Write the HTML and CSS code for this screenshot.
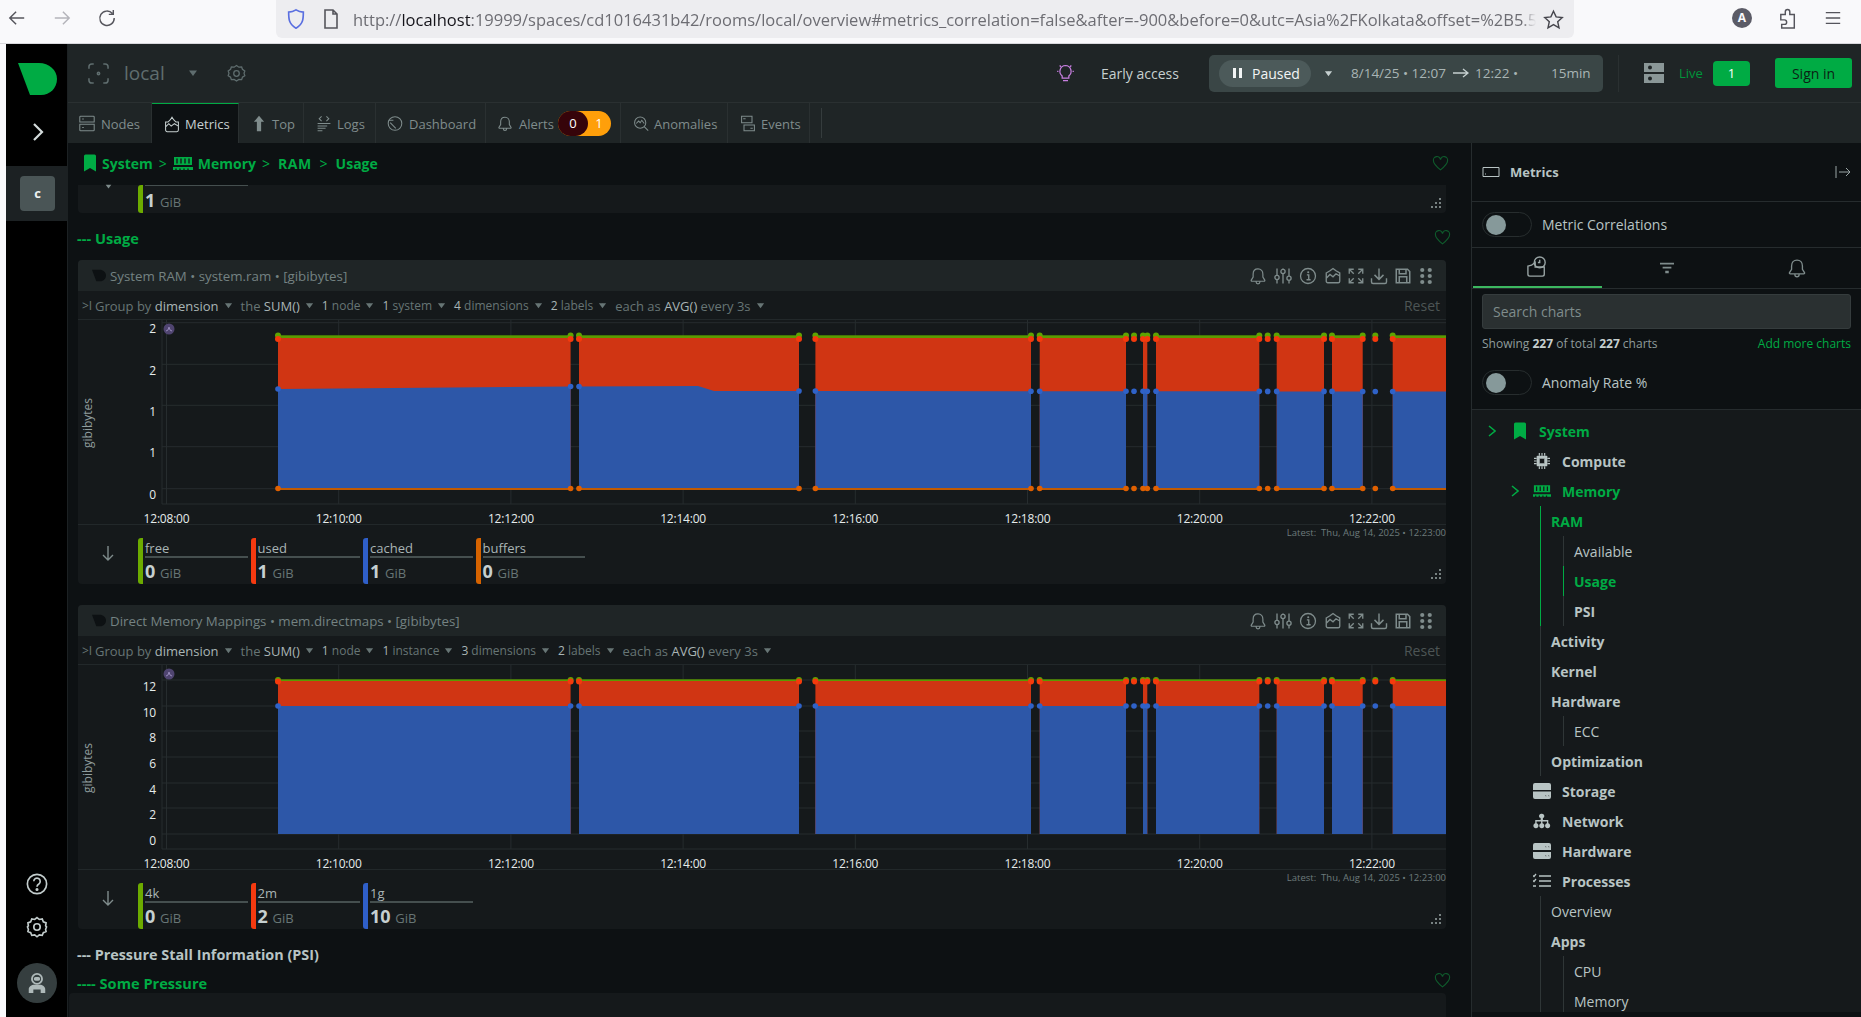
FILE: index.html
```html
<!DOCTYPE html>
<html lang="en">
<head>
    <meta charset="UTF-8">
    <meta name="viewport" content="width=device-width, initial-scale=1.0">
    <title>Netdata - local</title>
    <link rel="stylesheet" href="styles.css">
</head>
<body>
    <svg class="icon-defs" xmlns="http://www.w3.org/2000/svg">
        <symbol id="i-logo" viewBox="0 0 39 32"><path d="M0 0H21C31 0 39 7 39 16S32 32 23 32H12Z"/></symbol>
        <symbol id="i-bell" viewBox="0 0 24 24"><path d="M12 2.500c-4 0-6.500 3-6.500 7v4L3 17.500c-.4.8 0 1.500 1 1.500h16c1 0 1.400-.7 1-1.500l-2.500-4v-4c0-4-2.500-7-6.500-7zM9.500 19v1c0 1.500 1 2.500 2.500 2.500s2.500-1 2.500-2.500v-1" fill="none" stroke="currentColor" stroke-width="1.600"/></symbol>
        <symbol id="i-sliders" viewBox="0 0 24 24"><g fill="none" stroke="currentColor" stroke-width="1.800"><path d="M4 2v9M4 17v5M12 2v1M12 9v13M20 2v10M20 18v4"/><circle cx="4" cy="14" r="2.800"/><circle cx="12" cy="6" r="2.800"/><circle cx="20" cy="15" r="2.800"/></g></symbol>
        <symbol id="i-info" viewBox="0 0 24 24"><circle cx="12" cy="12" r="10" fill="none" stroke="currentColor" stroke-width="1.700"/><path d="M10.500 10.500H13V17M10 17h5.500" fill="none" stroke="currentColor" stroke-width="1.800"/><circle cx="12.300" cy="7" r="1.400" fill="currentColor"/></symbol>
        <symbol id="i-chart" viewBox="0 0 24 24"><path d="M3 8l5-3 4-3 4 3 5 3v11a2 2 0 0 1-2 2H5a2 2 0 0 1-2-2zM3 15l5-5 4 3 4-4 5 3" fill="none" stroke="currentColor" stroke-width="1.800"/></symbol>
        <symbol id="i-expand" viewBox="0 0 24 24"><path d="M3 9V3h6M3 3l6 6M21 9V3h-6M21 3l-6 6M3 15v6h6M3 21l6-6M21 15v6h-6M21 21l-6-6" fill="none" stroke="currentColor" stroke-width="1.800"/></symbol>
        <symbol id="i-download" viewBox="0 0 24 24"><path d="M12 2v14M6 10.500l6 6 6-6M2 15v5a2 2 0 0 0 2 2h16a2 2 0 0 0 2-2v-5" fill="none" stroke="currentColor" stroke-width="1.900"/></symbol>
        <symbol id="i-save" viewBox="0 0 24 24"><path d="M3 3h15l3 3v15H3zM7 3v6h9V3M7 21v-8h10v8" fill="none" stroke="currentColor" stroke-width="2"/></symbol>
        <symbol id="i-dots" viewBox="0 0 24 24"><g fill="currentColor"><circle cx="7" cy="4" r="2.800"/><circle cx="17" cy="4" r="2.800"/><circle cx="7" cy="12" r="2.800"/><circle cx="17" cy="12" r="2.800"/><circle cx="7" cy="20" r="2.800"/><circle cx="17" cy="20" r="2.800"/></g></symbol>
        <symbol id="i-heart" viewBox="0 0 24 24"><path d="M12 21C6 16 2 12.500 2 8a5 5 0 0 1 10-1.500A5 5 0 0 1 22 8c0 4.500-4 8-10 13z" fill="none" stroke="currentColor" stroke-width="1.600"/></symbol>
        <symbol id="i-grip" viewBox="0 0 12 12"><g fill="currentColor"><circle cx="10" cy="2" r="1"/><circle cx="6" cy="6" r="1"/><circle cx="10" cy="6" r="1"/><circle cx="2" cy="10" r="1"/><circle cx="6" cy="10" r="1"/><circle cx="10" cy="10" r="1"/></g></symbol>
        <symbol id="i-caret" viewBox="0 0 10 10"><path d="M1 2.500h8L5 8z" fill="currentColor"/><path d="M5 3v3" stroke="currentColor"/></symbol>
        <symbol id="i-bookmark" viewBox="0 0 14 18"><path d="M1 2a1.500 1.500 0 0 1 1.500-1.500h9A1.500 1.500 0 0 1 13 2v15.500l-6-3.500-6 3.500z" fill="currentColor"/></symbol>
        <symbol id="i-ram" viewBox="0 0 20 15"><path d="M1 1h18v8H1zM0 11h20v3H0z" fill="currentColor"/><path d="M4 2.500v5M8 2.500v5M12 2.500v5M16 2.500v5M3 12.500v2M7 12.500v2M11 12.500v2M15 12.500v2" stroke="#15191b" stroke-width="1.400"/></symbol>
        <symbol id="i-server" viewBox="0 0 20 20"><path d="M0 0h20v9H0zM0 11h20v9H0z" fill="currentColor"/><circle cx="6" cy="4.500" r="2" fill="#1f2526"/><circle cx="6" cy="15.500" r="2" fill="#1f2526"/></symbol>
    </svg>

    <div class="browser-bar">
        <svg class="nav-icon nav-back" viewBox="0 0 20 20"><path d="M18 10H3M9 3l-7 7 7 7"/></svg>
        <svg class="nav-icon nav-forward" viewBox="0 0 20 20"><path d="M2 10h15M11 3l7 7-7 7"/></svg>
        <svg class="nav-icon nav-reload" viewBox="0 0 20 20"><path d="M16 5a8 8 0 1 0 2 5M17 1v5h-5"/></svg>
        <div class="url-bar">
            <svg class="url-shield" viewBox="0 0 20 24"><path d="M10 2c3 2 5 2.500 8 2.500 0 7 0 13-8 17.500C2 17.500 2 11.500 2 4.500 5 4.500 7 4 10 2z"/></svg>
            <svg class="url-file" viewBox="0 0 16 20"><path d="M2 1h8l4 4v14H2zM10 1v4h4"/></svg>
            <div class="url-text">http://<b>localhost</b>:19999/spaces/cd1016431b42/rooms/local/overview#metrics_correlation=false&amp;after=-900&amp;before=0&amp;utc=Asia%2FKolkata&amp;offset=%2B5.5</div>
            <svg class="url-star" viewBox="0 0 24 24"><path d="M12 2.500l3 6.500 7 .8-5.200 4.700 1.500 7L12 17.900l-6.300 3.600 1.500-7L2 9.800 9 9z"/></svg>
        </div>
        <div class="browser-tools">
            <span class="account-icon">A</span>
            <svg class="nav-icon puzzle-icon" viewBox="0 0 20 24"><path d="M2 7h5V4a2.500 2.500 0 0 1 5 0v3h5v15H3v-4h3a2.500 2.500 0 0 0 0-5H2z"/></svg>
            <svg class="nav-icon menu-icon" viewBox="0 0 20 20"><path d="M2 4h16M2 10h16M2 16h16"/></svg>
        </div>
    </div>

    <div class="app">
        <aside class="rail">
            <svg class="rail-logo"><use href="#i-logo"/></svg>
            <svg class="rail-toggle" viewBox="0 0 12 20"><path d="M2 2l8 8-8 8"/></svg>
            <div class="rail-space"><span class="space-tile">c</span></div>
            <div class="rail-bottom">
                <svg class="rail-icon" viewBox="0 0 24 24"><circle cx="12" cy="12" r="10.500"/><path d="M8.500 9a3.500 3.500 0 1 1 5.500 3c-1.300.8-2 1.500-2 3"/><circle class="rail-dot" cx="12" cy="18" r=".8"/></svg>
                <svg class="rail-icon rail-gear" viewBox="0 0 24 24"><circle cx="12" cy="12" r="3.500"/><path d="M12 1.800l2.500 2 3.200-.5 1.200 3 3 1.200-.5 3.200 1 1.300-1 2.500.5 2.500-3 1.200-1.200 3-3.200-.5-2.500 2-2.500-2-3.200.5-1.200-3-3-1.200.5-2.500-1-2.500 1-1.300-.5-3.200 3-1.200 1.200-3 3.200.5z"/></svg>
                <div class="avatar">
                    <svg viewBox="0 0 24 24"><circle cx="12" cy="7.500" r="5.500" fill="none" stroke="#aeb9b9" stroke-width="2"/><rect x="8.500" y="5.500" width="7" height="4" rx="2" fill="#aeb9b9"/><path d="M3 23v-4c0-3 3-5 6-5h6c3 0 6 2 6 5v4h-5v-4H8v4z" fill="#aeb9b9"/></svg>
                </div>
            </div>
        </aside>

        <div class="workspace">
            <header class="top-bar">
                <svg class="room-icon" viewBox="0 0 22 22"><path d="M6 1H4a3 3 0 0 0-3 3v2M16 1h2a3 3 0 0 1 3 3v2M6 21H4a3 3 0 0 1-3-3v-2M16 21h2a3 3 0 0 0 3-3v-2"/><circle cx="11" cy="11" r="1.200"/></svg>
                <span class="room-name">local</span>
                <svg class="caret room-caret"><use href="#i-caret"/></svg>
                <svg class="room-gear" viewBox="0 0 24 24"><circle cx="12" cy="12" r="3.500"/><path d="M12 2l3 2 3.500-.3 1 3 3 2-1 3 1 3-3 2-1 3-3.500-.3-3 2-3-2-3.500.3-1-3-3-2 1-3-1-3 3-2 1-3 3.500.3z"/></svg>
                <div class="top-spacer"></div>
                <svg class="bulb-icon" viewBox="0 0 20 24"><path d="M10 3a7 7 0 0 0-4 12.500V18h8v-2.500A7 7 0 0 0 10 3zM7 21h6M3 3l1.500 1.500M17 3l-1.500 1.500M0 10h1.500M18.500 10H20"/></svg>
                <span class="early-access">Early access</span>
                <div class="time-box">
                    <div class="paused-pill"><span class="pause-mark"></span>Paused</div>
                    <svg class="caret time-caret"><use href="#i-caret"/></svg>
                    <span class="time-range">8/14/25 • 12:07 <svg class="time-arrow" viewBox="0 0 16 10"><path d="M0 5h15M10 1l5 4-5 4"/></svg> 12:22 •</span>
                    <span class="time-span">15min</span>
                </div>
                <div class="top-divider"></div>
                <svg class="live-icon"><use href="#i-server"/></svg>
                <span class="live-label">Live</span>
                <span class="live-count">1</span>
                <button class="sign-in">Sign in</button>
            </header>

            <nav class="tabs">
                <a class="tab tab-nodes"><svg viewBox="0 0 20 20"><path d="M2 1h16a1 1 0 0 1 1 1v6H1V2a1 1 0 0 1 1-1zM1 11h18v7a1 1 0 0 1-1 1H2a1 1 0 0 1-1-1zM4 4.500h2M4 15h2"/></svg>Nodes</a>
                <a class="tab tab-metrics is-active"><svg viewBox="0 0 20 20"><path d="M2 7l3 0 3-3 2-3 2 3 3 3 3 0v10a2 2 0 0 1-2 2H4a2 2 0 0 1-2-2zM2 13l4-4 3 3 4-3 5 3"/></svg>Metrics</a>
                <a class="tab tab-top"><svg viewBox="0 0 14 20"><path class="solid" d="M7 1l6 7H9.500v11h-5V8H1z"/></svg>Top</a>
                <a class="tab tab-logs"><svg viewBox="0 0 20 20"><path d="M7 1L4 4l3 3M13 1l3 3-3 3M2 10h16M2 13h12M2 16h10M2 19h6"/></svg>Logs</a>
                <a class="tab tab-dash"><svg viewBox="0 0 20 20"><circle cx="10" cy="10" r="8.500"/><path d="M4 9l7 7M2 6h6"/></svg>Dashboard</a>
                <a class="tab tab-alerts"><svg viewBox="0 0 24 24"><use href="#i-bell"/></svg>Alerts
                    <span class="alert-badge"><span class="alert-crit">0</span><span class="alert-warn">1</span></span>
                </a>
                <a class="tab tab-anom"><svg viewBox="0 0 20 20"><circle cx="9" cy="9" r="7"/><path d="M14 14l5 5M4 10l3-3 2 2 2-3 3 4"/></svg>Anomalies</a>
                <a class="tab tab-events"><svg viewBox="0 0 20 20"><path d="M2 1h13v8H2zM5 12h13v7H5zM4 4h3M13 16h3"/></svg>Events</a>
                <span class="tab-divider"></span>
            </nav>

            <div class="content">
                <main class="main">
                    <div class="crumbs">
                        <svg class="crumb-mark"><use href="#i-bookmark"/></svg><span>System</span><i>&gt;</i>
                        <svg class="crumb-ram"><use href="#i-ram"/></svg><span>Memory</span><i>&gt;</i>
                        <span class="crumb-ram-name">RAM</span><i>&gt;</i><span class="crumb-usage">Usage</span>
                        <svg class="heart heart-crumbs"><use href="#i-heart"/></svg>
                    </div>

                    <div class="stub-card">
                        <svg class="caret stub-caret"><use href="#i-caret"/></svg>
                        <div class="legend-item legend-green stub-legend">
                            <span class="legend-name"></span>
                            <span class="legend-value">1 <small>GiB</small></span>
                        </div>
                        <svg class="grip"><use href="#i-grip"/></svg>
                    </div>

                    <h3 class="section-title section-usage is-green">--- Usage<svg class="heart heart-section"><use href="#i-heart"/></svg></h3>

                    <section class="chart-card">
                        <div class="chart-head">
                            <svg class="chart-logo"><use href="#i-logo"/></svg>
                            <span class="chart-title">System RAM • system.ram • [gibibytes]</span>
                            <div class="chart-tools">
                                <svg><use href="#i-bell"/></svg><svg><use href="#i-sliders"/></svg><svg><use href="#i-info"/></svg><svg><use href="#i-chart"/></svg><svg><use href="#i-expand"/></svg><svg><use href="#i-download"/></svg><svg><use href="#i-save"/></svg><svg><use href="#i-dots"/></svg>
                            </div>
                        </div>
                        <div class="chart-filters">
                            <span class="filter-toggle">&gt;I</span>
                            <span class="filter">Group by <b>dimension</b><svg class="caret"><use href="#i-caret"/></svg></span>
                            <span class="filter">the <b>SUM()</b><svg class="caret"><use href="#i-caret"/></svg></span>
                            <span class="filter filter-count"><b>1</b> node<svg class="caret"><use href="#i-caret"/></svg></span>
                            <span class="filter filter-count"><b>1</b> system<svg class="caret"><use href="#i-caret"/></svg></span>
                            <span class="filter filter-count"><b>4</b> dimensions<svg class="caret"><use href="#i-caret"/></svg></span>
                            <span class="filter filter-count"><b>2</b> labels<svg class="caret"><use href="#i-caret"/></svg></span>
                            <span class="filter">each as <b>AVG()</b> every 3s<svg class="caret"><use href="#i-caret"/></svg></span>
                            <span class="filter-reset">Reset</span>
                        </div>
                        <div class="chart-plot" id="chartRam"></div>
                        <div class="chart-legend">
                            <span class="legend-latest">Latest:&nbsp; Thu, Aug 14, 2025 • 12:23:00</span>
                            <svg class="legend-arrow" viewBox="0 0 12 16"><path d="M6 1v14M1 10l5 5 5-5"/></svg>
                            <div class="legend-item legend-green"><span class="legend-name">free</span><span class="legend-value">0 <small>GiB</small></span></div>
                            <div class="legend-item legend-red"><span class="legend-name">used</span><span class="legend-value">1 <small>GiB</small></span></div>
                            <div class="legend-item legend-blue"><span class="legend-name">cached</span><span class="legend-value">1 <small>GiB</small></span></div>
                            <div class="legend-item legend-orange"><span class="legend-name">buffers</span><span class="legend-value">0 <small>GiB</small></span></div>
                            <svg class="grip"><use href="#i-grip"/></svg>
                        </div>
                    </section>

                    <section class="chart-card chart-card-second">
                        <div class="chart-head">
                            <svg class="chart-logo"><use href="#i-logo"/></svg>
                            <span class="chart-title">Direct Memory Mappings • mem.directmaps • [gibibytes]</span>
                            <div class="chart-tools">
                                <svg><use href="#i-bell"/></svg><svg><use href="#i-sliders"/></svg><svg><use href="#i-info"/></svg><svg><use href="#i-chart"/></svg><svg><use href="#i-expand"/></svg><svg><use href="#i-download"/></svg><svg><use href="#i-save"/></svg><svg><use href="#i-dots"/></svg>
                            </div>
                        </div>
                        <div class="chart-filters">
                            <span class="filter-toggle">&gt;I</span>
                            <span class="filter">Group by <b>dimension</b><svg class="caret"><use href="#i-caret"/></svg></span>
                            <span class="filter">the <b>SUM()</b><svg class="caret"><use href="#i-caret"/></svg></span>
                            <span class="filter filter-count"><b>1</b> node<svg class="caret"><use href="#i-caret"/></svg></span>
                            <span class="filter filter-count"><b>1</b> instance<svg class="caret"><use href="#i-caret"/></svg></span>
                            <span class="filter filter-count"><b>3</b> dimensions<svg class="caret"><use href="#i-caret"/></svg></span>
                            <span class="filter filter-count"><b>2</b> labels<svg class="caret"><use href="#i-caret"/></svg></span>
                            <span class="filter">each as <b>AVG()</b> every 3s<svg class="caret"><use href="#i-caret"/></svg></span>
                            <span class="filter-reset">Reset</span>
                        </div>
                        <div class="chart-plot" id="chartMaps"></div>
                        <div class="chart-legend">
                            <span class="legend-latest">Latest:&nbsp; Thu, Aug 14, 2025 • 12:23:00</span>
                            <svg class="legend-arrow" viewBox="0 0 12 16"><path d="M6 1v14M1 10l5 5 5-5"/></svg>
                            <div class="legend-item legend-green"><span class="legend-name">4k</span><span class="legend-value">0 <small>GiB</small></span></div>
                            <div class="legend-item legend-red"><span class="legend-name">2m</span><span class="legend-value">2 <small>GiB</small></span></div>
                            <div class="legend-item legend-blue"><span class="legend-name">1g</span><span class="legend-value">10 <small>GiB</small></span></div>
                            <svg class="grip"><use href="#i-grip"/></svg>
                        </div>
                    </section>

                    <h3 class="section-title section-psi">--- Pressure Stall Information (PSI)</h3>
                    <h3 class="section-title section-some is-green">---- Some Pressure<svg class="heart heart-section"><use href="#i-heart"/></svg></h3>
                    <div class="next-card"></div>
                </main>

                <aside class="panel">
                    <div class="panel-head">
                        <svg class="panel-screen" viewBox="0 0 18 10"><path d="M1 .500h16v9H1zM3 7h1"/></svg>
                        <span>Metrics</span>
                        <svg class="panel-collapse" viewBox="0 0 16 12"><path d="M1 0v12M4 6h11M11 2l4 4-4 4"/></svg>
                    </div>
                    <div class="panel-row panel-row-border">
                        <span class="switch"><span class="switch-knob"></span></span>Metric Correlations
                    </div>
                    <div class="panel-tabs">
                        <span class="panel-tab is-active"><svg viewBox="0 0 22 24"><path d="M1 11l4-1 4-3v5h10v8a2 2 0 0 1-2 2H3a2 2 0 0 1-2-2z"/><circle cx="14" cy="7" r="6"/><path d="M14 4v3h-2"/></svg></span>
                        <span class="panel-tab"><svg viewBox="0 0 16 12"><path class="solid" d="M0 0h16v2H0zM3 4.500h10v2H3zM6 9h4v3H6z"/></svg></span>
                        <span class="panel-tab"><svg viewBox="0 0 24 24"><use href="#i-bell"/></svg></span>
                    </div>
                    <div class="panel-search">
                        <div class="search-box">Search charts</div>
                        <div class="search-meta"><span>Showing <b>227</b> of total <b>227</b> charts</span><a>Add more charts</a></div>
                    </div>
                    <div class="panel-row panel-row-anomaly">
                        <span class="switch"><span class="switch-knob"></span></span>Anomaly Rate %
                    </div>
                    <div class="tree">
                        <div class="tree-row tree-top is-green is-bold"><svg class="tree-chevron" viewBox="0 0 8 12"><path d="M1 1l6 5-6 5"/></svg><svg class="tree-bookmark"><use href="#i-bookmark"/></svg>System</div>
                        <div class="tree-row tree-group is-bold">
                            <svg class="tree-icon" viewBox="0 0 18 18"><path class="solid" d="M4 3h10a1 1 0 0 1 1 1v10a1 1 0 0 1-1 1H4a1 1 0 0 1-1-1V4a1 1 0 0 1 1-1z"/><path class="cut" d="M6 6h6v6H6z"/><path d="M6 0v3M9 0v3M12 0v3M6 15v3M9 15v3M12 15v3M0 6h3M0 9h3M0 12h3M15 6h3M15 9h3M15 12h3"/></svg>Compute</div>
                        <div class="tree-row tree-group is-green is-bold"><svg class="tree-chevron tree-chevron-sub" viewBox="0 0 8 12"><path d="M1 1l6 5-6 5"/></svg><svg class="tree-icon"><use href="#i-ram"/></svg>Memory</div>
                        <div class="tree-sub">
                            <div class="tree-open">
                                <div class="tree-row is-green is-bold">RAM</div>
                                <div class="tree-leafs">
                                    <div class="tree-row">Available</div>
                                    <div class="tree-row is-green is-bold is-current">Usage</div>
                                    <div class="tree-row is-bold">PSI</div>
                                </div>
                            </div>
                            <div class="tree-row is-bold">Activity</div>
                            <div class="tree-row is-bold">Kernel</div>
                            <div class="tree-row is-bold">Hardware</div>
                            <div class="tree-leafs"><div class="tree-row">ECC</div></div>
                            <div class="tree-row is-bold">Optimization</div>
                        </div>
                        <div class="tree-row tree-group is-bold"><svg class="tree-icon" viewBox="0 0 18 16"><path class="solid" d="M2 0h14a2 2 0 0 1 2 2v5H0V2a2 2 0 0 1 2-2zM0 8.500h18V14a2 2 0 0 1-2 2H2a2 2 0 0 1-2-2z"/><path class="cut" d="M12 12h1.500v1.500H12zM15 12h1.500v1.500H15z"/></svg>Storage</div>
                        <div class="tree-row tree-group is-bold"><svg class="tree-icon" viewBox="0 0 20 16"><path class="solid" d="M10 0a2.500 2.500 0 0 1 1 4.800V7h6v3.500a2.800 2.800 0 1 1-1.500 0V8.500h-5v2a2.800 2.800 0 1 1-1.500 0v-2h-5v2a2.800 2.800 0 1 1-1.500 0V7h6V4.800A2.500 2.500 0 0 1 10 0z"/></svg>Network</div>
                        <div class="tree-row tree-group is-bold"><svg class="tree-icon" viewBox="0 0 18 16"><path class="solid" d="M2 0h14a2 2 0 0 1 2 2v5H0V2a2 2 0 0 1 2-2zM0 9h18v5a2 2 0 0 1-2 2H2a2 2 0 0 1-2-2z"/><path class="cut" d="M12 3h1.500v1.500H12zM15 3h1.500v1.500H15zM12 12h1.500v1.500H12zM15 12h1.500v1.500H15z"/></svg>Hardware</div>
                        <div class="tree-row tree-group is-bold"><svg class="tree-icon" viewBox="0 0 18 14"><path d="M6 2h12M6 7h12M6 12h12M0 1.500l1 1L3 0M0 6.500l1 1L3 5M0 12h3"/></svg>Processes</div>
                        <div class="tree-sub tree-sub-last">
                            <div class="tree-row">Overview</div>
                            <div class="tree-row is-bold">Apps</div>
                            <div class="tree-leafs">
                                <div class="tree-row">CPU</div>
                                <div class="tree-row">Memory</div>
                            </div>
                        </div>
                    </div>
                </aside>
            </div>
        </div>
    </div>
    <script src="charts.js"></script>
</body>
</html>
```

FILE: styles.css
```css
* {
    box-sizing: border-box;
}
html, body {
    height: 100%;
}
body {
    margin: 0;
    overflow: hidden;
    font-family: "Open Sans", sans-serif;
    font-size: 13px;
    background-color: #f9f9fb;
    color: #b8c4c4;
}
svg {
    display: block;
    flex: none;
}
.icon-defs {
    display: none;
}

/* browser chrome */
.browser-bar {
    height: 44px;
    display: flex;
    align-items: flex-start;
    background-color: #f9f9fb;
    border-bottom: 1px solid #d8d8dc;
}
.nav-icon {
    width: 18px;
    height: 18px;
    margin-top: 9px;
    fill: none;
    stroke: #55555c;
    stroke-width: 1.6;
}
.nav-back {
    margin-left: 8px;
}
.nav-forward {
    margin-left: 27px;
    stroke: #b4b4ba;
}
.nav-reload {
    margin-left: 27px;
}
.url-bar {
    width: 1298px;
    height: 38px;
    margin-left: 160px;
    padding: 0 10px 0 10px;
    display: flex;
    align-items: center;
    background-color: #ededf0;
    border-radius: 0 0 6px 6px;
}
.url-shield {
    width: 20px;
    height: 22px;
    fill: none;
    stroke: #5a6fe0;
    stroke-width: 1.8;
}
.url-file {
    width: 16px;
    height: 20px;
    margin-left: 17px;
    fill: none;
    stroke: #55555c;
    stroke-width: 1.600;
}
.url-text {
    flex: 1;
    margin-left: 14px;
    overflow: hidden;
    white-space: nowrap;
    font-size: 16.500px;
    color: #6d6d73;
    -webkit-mask-image: linear-gradient(to left, transparent 0, #000 14px);
    mask-image: linear-gradient(to left, transparent 0, #000 14px);
}
.url-text b {
    font-weight: 400;
    color: #15141a;
}
.url-star {
    width: 21px;
    height: 21px;
    margin-left: 7px;
    fill: none;
    stroke: #45454c;
    stroke-width: 1.600;
}
.browser-tools {
    display: flex;
    align-items: flex-start;
    margin-left: 158px;
}
.account-icon {
    width: 20px;
    height: 20px;
    margin-top: 8px;
    border-radius: 50%;
    background-color: #5b5b66;
    color: #f9f9fb;
    font-size: 12px;
    font-weight: 700;
    line-height: 20px;
    text-align: center;
}
.puzzle-icon {
    height: 22px;
    margin-top: 8px;
    margin-left: 27px;
}
.menu-icon {
    margin-left: 27px;
}

/* app frame */
.app {
    height: 973px;
    margin-left: 6px;
    display: flex;
    background-color: #0d1113;
}
.rail {
    width: 62px;
    flex: none;
    display: flex;
    flex-direction: column;
    background-color: #000;
    border-right: 1px solid #1c2123;
}
.rail-logo {
    width: 39px;
    height: 32px;
    margin: 19px 0 0 12px;
    fill: #00ab44;
}
.rail-toggle {
    width: 12px;
    height: 20px;
    margin: 27px 0 0 26px;
    fill: none;
    stroke: #d4dcdc;
    stroke-width: 2.200;
}
.rail-space {
    height: 55px;
    margin-top: 24px;
    padding: 10px 0 0 14px;
    background-color: #1c2123;
}
.space-tile {
    display: block;
    width: 35px;
    height: 35px;
    border-radius: 4px;
    background-color: #4a5556;
    color: #eef2f2;
    font-size: 13px;
    font-weight: 700;
    line-height: 35px;
    text-align: center;
}
.rail-bottom {
    margin-top: auto;
    padding-bottom: 14px;
    display: flex;
    flex-direction: column;
    align-items: center;
    gap: 21px;
}
.rail-icon {
    width: 22px;
    height: 22px;
    fill: none;
    stroke: #c2cccc;
    stroke-width: 1.800;
}
.rail-gear {
    margin-bottom: 4px;
}
.rail-dot {
    fill: #c2cccc;
}
.avatar {
    width: 40px;
    height: 40px;
    padding: 9px;
    border-radius: 50%;
    background-color: #353e3f;
}
.workspace {
    flex: 1;
    min-width: 0;
    display: flex;
    flex-direction: column;
}

/* top bar */
.top-bar {
    height: 59px;
    flex: none;
    display: flex;
    align-items: center;
    padding-left: 20px;
    background-color: #1f2526;
    border-bottom: 1px solid #2a3031;
}
.room-icon {
    width: 21px;
    height: 21px;
    fill: none;
    stroke: #5f6d6e;
    stroke-width: 1.600;
}
.room-name {
    margin-left: 15px;
    width: 58px;
    font-size: 19px;
    color: #5f6d6e;
}
.caret {
    width: 9px;
    height: 9px;
    color: #7f8c8c;
}
.room-caret {
    margin-left: 6px;
    width: 10px;
    height: 10px;
    color: #5f6d6e;
}
.room-gear {
    width: 19px;
    height: 19px;
    margin-left: 29px;
    fill: none;
    stroke: #5f6d6e;
    stroke-width: 1.600;
}
.top-spacer {
    flex: 1;
}
.bulb-icon {
    width: 17px;
    height: 20px;
    fill: none;
    stroke: #c77fe0;
    stroke-width: 1.500;
}
.early-access {
    width: 108px;
    margin-left: 27px;
    font-size: 14px;
    color: #c6d0d0;
}
.time-box {
    width: 394px;
    height: 37px;
    display: flex;
    align-items: center;
    padding-left: 10px;
    border-radius: 5px;
    background-color: #3a4646;
}
.paused-pill {
    width: 92px;
    height: 27px;
    display: flex;
    align-items: center;
    padding-left: 14px;
    border-radius: 14px;
    background-color: #4c5a5a;
    color: #f2f5f5;
    font-size: 14px;
}
.pause-mark {
    width: 9px;
    height: 10px;
    margin-right: 10px;
    border-left: 3.500px solid #f2f5f5;
    border-right: 3.500px solid #f2f5f5;
}
.time-caret {
    margin-left: 13px;
    color: #c6d0d0;
}
.time-range {
    margin-left: 18px;
    width: 200px;
    display: flex;
    align-items: center;
    white-space: pre;
    font-size: 13.500px;
    color: #a9b5b5;
}
.time-arrow {
    width: 16px;
    height: 10px;
    margin: 0 3px;
    fill: none;
    stroke: #c6d0d0;
    stroke-width: 1.300;
}
.time-span {
    font-size: 13.500px;
    color: #a9b5b5;
}
.top-divider {
    width: 1px;
    height: 37px;
    margin-left: 15px;
    background-color: #2a3031;
}
.live-icon {
    width: 20px;
    height: 20px;
    margin-left: 25px;
    color: #8a9797;
}
.live-label {
    width: 34px;
    margin-left: 15px;
    font-size: 13px;
    color: #00953b;
}
.live-count {
    width: 37px;
    height: 25px;
    border-radius: 4px;
    background-color: #00ab44;
    color: #fff;
    font-size: 13px;
    line-height: 25px;
    text-align: center;
}
.sign-in {
    width: 77px;
    height: 30px;
    margin-left: 25px;
    margin-right: 9px;
    border: none;
    border-radius: 3px;
    background-color: #00ab44;
    color: #0c1f14;
    font: 14px "Open Sans", sans-serif;
}

/* tabs */
.tabs {
    height: 40px;
    flex: none;
    display: flex;
    background-color: #1f2526;
}
.tab {
    display: flex;
    align-items: center;
    gap: 5px;
    padding: 1px 0 0 13px;
    border-right: 1px solid #2a3031;
    color: #7f8c8c;
    font-size: 13px;
}
.tab svg {
    width: 16px;
    height: 17px;
    fill: none;
    stroke: currentColor;
    stroke-width: 1.300;
}
.tab svg .solid {
    fill: currentColor;
    stroke: none;
}
.tab-nodes { width: 84px; padding-left: 11px; gap: 6px; }
.tab-metrics { width: 87px; padding-left: 12px; }
.tab-top { width: 65px; padding-left: 14px; gap: 7px; }
.tab-top svg { width: 12px; }
.tab-logs { width: 72px; padding-left: 12px; }
.tab-dash { width: 110px; padding-left: 11px; gap: 6px; }
.tab-alerts { width: 135px; padding-left: 11px; gap: 6px; }
.tab-anom { width: 107px; padding-left: 12px; }
.tab-events { width: 82px; padding-left: 12px; }
.tab.is-active {
    background-color: #0d1113;
    border-top: 1px solid #00ab44;
    color: #c6d0d0;
}
.alert-badge {
    display: flex;
    width: 53px;
    height: 25px;
    margin-left: -2px;
    border-radius: 13px;
    background-color: #ff9f0a;
    color: #fff;
    font-size: 13px;
    line-height: 25px;
    text-align: center;
}
.alert-crit {
    width: 30px;
    border-radius: 13px;
    background-color: #36040a;
}
.alert-warn {
    width: 22px;
    text-align: center;
}
.tab-divider {
    width: 1px;
    height: 30px;
    margin: 5px 0 0 11px;
    background-color: #353c3d;
}

.content {
    flex: 1;
    min-height: 0;
    display: flex;
}
.main {
    flex: 1;
    min-width: 0;
    padding: 0 25px 0 10px;
    overflow: hidden;
}

/* breadcrumb */
.crumbs {
    height: 42px;
    display: flex;
    align-items: center;
    padding: 0 0 2px 5px;
    position: relative;
    font-size: 14px;
    font-weight: 700;
    color: #00ab44;
}
.crumbs i {
    margin: 0 6px;
    font-style: normal;
    font-weight: 400;
}
.crumb-mark {
    width: 14px;
    height: 18px;
    margin-right: 5px;
}
.crumb-ram {
    width: 20px;
    height: 15px;
    margin-right: 5px;
}
.crumb-ram-name {
    margin: 0 2px;
    letter-spacing: .5px;
}
.crumb-usage {
    margin-left: 2px;
}
.heart {
    width: 17px;
    height: 17px;
    color: #0f5a2c;
    position: absolute;
    right: -3px;
}
.heart-crumbs {
    top: 12px;
}
.stub-card {
    height: 28px;
    position: relative;
    display: flex;
    border-radius: 0 0 4px 4px;
    background-color: #15191b;
}
.stub-caret {
    margin: -2px 0 0 26px;
    height: 7px;
}
.stub-legend {
    margin-left: 25px;
}
.stub-legend .legend-value {
    margin-top: 2px;
    line-height: 25px;
}
.grip {
    position: absolute;
    right: 4px;
    bottom: 4px;
    width: 12px;
    height: 12px;
    color: #9aa6a6;
}
.section-title {
    position: relative;
    margin: 0 0 0 -1px;
    height: 47px;
    padding-top: 15px;
    font-size: 14.600px;
    font-weight: 700;
    line-height: 20px;
    color: #b8c4c4;
}
.section-title.is-green {
    color: #00ab44;
}
.heart-section {
    top: 16px;
    right: -5px;
}
.section-psi {
    height: 28px;
    margin-top: 16px;
    padding-top: 0;
    font-size: 14.400px;
}
.section-some {
    height: 28px;
    padding-top: 0;
}
.section-some .heart-section {
    top: -1px;
}
.next-card {
    height: 40px;
    margin: -8px 0 0 -9px;
    border-radius: 4px 4px 0 0;
    background-color: #15191b;
}

/* chart cards */
.chart-card {
    border-radius: 4px;
    background-color: #15191b;
}
.chart-card-second {
    margin-top: 21px;
}
.chart-head {
    height: 31px;
    display: flex;
    align-items: center;
    padding-left: 14px;
    background-color: #1f2526;
    border-radius: 4px 4px 0 0;
}
.chart-logo {
    width: 14px;
    height: 13px;
    fill: #0d1113;
}
.chart-title {
    margin-left: 4px;
    color: #748282;
    font-size: 13.300px;
}
.chart-tools {
    margin-left: auto;
    margin-right: 11px;
    display: flex;
    gap: 6.800px;
    color: #7f8c8c;
}
.chart-tools svg {
    width: 18px;
    height: 18px;
}
.chart-tools svg:nth-child(n+5) {
    margin-left: -1.500px;
}
.chart-filters {
    height: 29px;
    display: flex;
    align-items: center;
    padding: 1px 0 0 4px;
    border-bottom: 1px solid #22282a;
    color: #677575;
    font-size: 13px;
    white-space: nowrap;
}
.filter-toggle {
    width: 13px;
    font-size: 12px;
}
.filter {
    display: flex;
    align-items: center;
    white-space: pre;
    margin-right: 8px;
}
.filter-count {
    font-size: 12px;
}
.filter b {
    font-weight: 400;
    color: #a9b5b5;
}
.filter .caret {
    margin-left: 5px;
    color: #677575;
}
.filter-reset {
    margin-left: auto;
    margin-right: 6px;
    font-size: 14px;
    color: #4d5555;
}
.chart-plot {
    height: 205px;
    border-bottom: 1px solid #22282a;
}
.chart-plot svg {
    width: 100%;
    height: 210px;
}
.grid-line {
    stroke: #262c2e;
    stroke-width: 1;
}
.axis-label {
    fill: #e6ecec;
    font-size: 12px;
    letter-spacing: -.2px;
}
.axis-title {
    fill: #8f9c9c;
    font-size: 12px;
}
.anomaly-mark {
    fill: #4f4470;
}
.anomaly-wave {
    fill: none;
    stroke: #9488b8;
    stroke-width: 1;
}
.area-green { fill: #5b9a00; }
.area-red { fill: #d03513; }
.area-blue { fill: #2d57a8; }
.area-orange { fill: #c25a00; }
.dot-green { fill: #5fa300; }
.dot-red { fill: #f53a0c; }
.dot-blue { fill: #2f62c8; }
.dot-orange { fill: #e06000; }

.chart-legend {
    height: 59px;
    position: relative;
    display: flex;
    padding: 13px 0 0 60px;
}
.legend-latest {
    position: absolute;
    top: 1px;
    right: 0;
    font-size: 9.500px;
    color: #6d7b7b;
}
.legend-arrow {
    position: absolute;
    left: 24px;
    top: 20px;
    width: 12px;
    height: 16px;
    fill: none;
    stroke: #7f8c8c;
    stroke-width: 1.400;
}
.legend-item {
    width: 112.500px;
    padding-left: 7px;
    border-left: 5px solid;
    border-radius: 3px;
    display: flex;
    flex-direction: column;
}
.legend-green { border-color: #6cab00; }
.legend-red { border-color: #f53a10; }
.legend-blue { border-color: #2f5fc9; }
.legend-orange { border-color: #d66300; }
.legend-name {
    height: 20px;
    margin: 0 3px 0 -5px;
    border-bottom: 2px solid #454f4f;
    font-size: 13px;
    line-height: 20px;
    color: #a9b5b5;
}
.legend-value {
    margin-left: -5px;
    font-size: 18px;
    font-weight: 700;
    line-height: 27px;
    color: #c6d0d0;
}
.legend-value small {
    font-size: 13px;
    font-weight: 400;
    color: #677575;
}
.stub-legend .legend-name {
    height: 1px;
    border-bottom: 1px solid #454f4f;
}

/* right panel */
.panel {
    width: 390px;
    flex: none;
    display: flex;
    flex-direction: column;
    border-left: 1px solid #262c2e;
    background-color: #0d1113;
}
.panel-head {
    height: 59px;
    display: flex;
    align-items: center;
    padding: 0 10px;
    border-bottom: 1px solid #262c2e;
    font-size: 13px;
    font-weight: 700;
    color: #b8c4c4;
}
.panel-screen {
    width: 18px;
    height: 10px;
    margin-right: 10px;
    fill: none;
    stroke: #b8c4c4;
}
.panel-collapse {
    width: 16px;
    height: 12px;
    margin-left: auto;
    fill: none;
    stroke: #9aa6a6;
}
.panel-row {
    display: flex;
    align-items: center;
    padding-left: 10px;
    font-size: 14px;
    color: #b8c4c4;
}
.panel-row-border {
    height: 46px;
    border-bottom: 1px solid #262c2e;
}
.panel-row-anomaly {
    height: 55px;
    margin-top: 3px;
    border-bottom: 1px solid #262c2e;
}
.switch {
    width: 50px;
    height: 25px;
    margin-right: 10px;
    padding: 2px 3px;
    border: 1px solid #272d2e;
    border-radius: 13px;
}
.switch-knob {
    display: block;
    width: 20px;
    height: 20px;
    border-radius: 50%;
    background-color: #86999a;
}
.panel-tabs {
    height: 41px;
    display: flex;
    border-bottom: 1px solid #262c2e;
}
.panel-tab {
    width: 129px;
    display: flex;
    align-items: center;
    justify-content: center;
    color: #7f8c8c;
    margin-left: 1px;
}
.panel-tab svg {
    width: 20px;
    height: 22px;
    fill: none;
    stroke: currentColor;
    stroke-width: 1.500;
}
.panel-tab svg .solid {
    fill: currentColor;
    stroke: none;
}
.panel-tab:nth-child(2) svg {
    width: 14px;
}
.panel-tab.is-active {
    border-bottom: 2px solid #3cb860;
    color: #9aa6a6;
}
.panel-search {
    padding: 5px 10px 0;
}
.search-box {
    height: 35px;
    padding: 0 10px;
    border: 1px solid #353c3d;
    border-radius: 3px;
    background-color: #2a3031;
    color: #7f8c8c;
    font-size: 14px;
    line-height: 33px;
}
.search-meta {
    display: flex;
    justify-content: space-between;
    margin-top: 6px;
    font-size: 12px;
    color: #8f9c9c;
}
.search-meta a {
    color: #00ab44;
}
.search-meta b {
    color: #c6d0d0;
}
.tree {
    flex: 1;
    min-height: 0;
    margin-bottom: 5px;
    padding-top: 6px;
    overflow: hidden;
    background-color: #15191b;
    font-size: 14px;
    color: #b8c4c4;
}
.tree-row {
    height: 30px;
    display: flex;
    align-items: center;
}
.tree-row.is-bold {
    font-weight: 700;
}
.tree-row.is-green {
    color: #00ab44;
}
.tree-top {
    padding-left: 67px;
    position: relative;
}
.tree-group {
    padding-left: 90px;
    position: relative;
}
.tree-chevron {
    position: absolute;
    left: 16px;
    top: 9px;
    width: 8px;
    height: 12px;
    fill: none;
    stroke: #00ab44;
    stroke-width: 1.500;
}
.tree-chevron-sub {
    left: 39px;
}
.tree-bookmark {
    position: absolute;
    left: 41px;
    top: 6px;
    width: 14px;
    height: 18px;
}
.tree-icon {
    position: absolute;
    left: 61px;
    top: 7px;
    width: 18px;
    height: 16px;
    fill: none;
    stroke: #b8c4c4;
    stroke-width: 1.300;
}
.tree-icon .solid {
    fill: #b8c4c4;
    stroke: none;
}
.tree-icon .cut {
    fill: #15191b;
    stroke: #b8c4c4;
    stroke-width: .8;
}
.tree-row.is-green .tree-icon {
    stroke: none;
    color: #00ab44;
}
.tree-sub {
    margin-left: 68px;
    padding-left: 10px;
    border-left: 1px solid #2f3637;
}
.tree-open {
    margin-left: -11px;
    padding-left: 10px;
    border-left: 1px solid #00ab44;
}
.tree-leafs {
    margin-left: 12px;
    padding-left: 10px;
    border-left: 1px solid #2f3637;
}
.tree-row.is-current {
    margin-left: -11px;
    padding-left: 10px;
    border-left: 1px solid #00ab44;
}
```

FILE: charts.js
```js
const SEGMENTS = [
    [278, 570.6], [579, 799], [815.4, 1031], [1039.7, 1126], [1134, 1134], [1143, 1147.3],
    [1156, 1259.3], [1267.7, 1267.7], [1276.7, 1324], [1332, 1362.7], [1375.3, 1375.3], [1392.7, 1446]
];
const CARD_LEFT = 78;
const WIDTH = 1368;
const TIMES = ['12:08:00', '12:10:00', '12:12:00', '12:14:00', '12:16:00', '12:18:00', '12:20:00', '12:22:00'];

function blueTop(points, x) {
    for (let i = 1; i < points.length; i++) {
        if (x <= points[i][0]) {
            const [x0, y0] = points[i - 1];
            const [x1, y1] = points[i];
            return y0 + (y1 - y0) * (x - x0) / (x1 - x0);
        }
    }
    return points[points.length - 1][1];
}

function drawChart(id, opts) {
    const y = (v) => v - opts.top;
    const px = (v) => v - CARD_LEFT;
    let out = '';

    opts.grid.forEach((g) => {
        out += `<line class="grid-line" x1="${px(162)}" x2="${WIDTH}" y1="${y(g)}" y2="${y(g)}"/>`;
    });
    out += `<line class="grid-line" x1="${px(162)}" x2="${WIDTH}" y1="${y(opts.axisBottom)}" y2="${y(opts.axisBottom)}"/>`;
    out += `<line class="grid-line" x1="${px(162)}" x2="${px(162)}" y1="0" y2="${y(opts.axisBottom)}"/>`;
    TIMES.forEach((t, i) => {
        const x = px(166.5 + 172.2 * i);
        out += `<line class="grid-line" x1="${x}" x2="${x}" y1="0" y2="${y(opts.axisBottom)}"/>`;
        out += `<text class="axis-label" x="${x}" y="${y(opts.axisBottom) + 19}" text-anchor="middle">${t}</text>`;
    });
    opts.labels.forEach((label, i) => {
        out += `<text class="axis-label" x="${px(156)}" y="${y(opts.grid[i]) + 10.5}" text-anchor="end">${label}</text>`;
    });
    out += `<text class="axis-title" transform="translate(${px(92)} ${y(opts.titleY)}) rotate(-90)" text-anchor="middle">gibibytes</text>`;

    const ax = px(169);
    const ay = y(opts.top + 9);
    out += `<circle class="anomaly-mark" cx="${ax}" cy="${ay}" r="5.500"/>`;
    out += `<path class="anomaly-wave" d="M${ax - 3} ${ay + 2}l2-1 1-3 1 3 2 1"/>`;

    SEGMENTS.forEach(([a, b]) => {
        if (b > a) {
            const knots = [a, ...opts.blue.map((p) => p[0]).filter((k) => k > a && k < b), b];
            const blueLine = knots.map((k) => `${px(k)},${y(blueTop(opts.blue, k))}`).join(' ');
            out += `<rect class="area-red" x="${px(a)}" y="${y(opts.redTop)}" width="${b - a}" height="${opts.bottom - opts.redTop}"/>`;
            out += `<polygon class="area-blue" points="${px(a)},${y(opts.bottom)} ${blueLine} ${px(b)},${y(opts.bottom)}"/>`;
            out += `<rect class="area-green" x="${px(a)}" y="${y(opts.greenTop)}" width="${b - a}" height="${opts.redTop - opts.greenTop}"/>`;
            if (opts.orange) {
                out += `<rect class="area-orange" x="${px(a)}" y="${y(opts.bottom - 1.5)}" width="${b - a}" height="2"/>`;
            }
        }
        [a, b].filter((x, i) => x < 1445 && (i === 0 || b > a)).forEach((x) => {
            out += `<circle class="dot-green" cx="${px(x)}" cy="${y(opts.greenDot)}" r="3"/>`;
            out += `<circle class="dot-red" cx="${px(x)}" cy="${y(opts.redDot)}" r="3"/>`;
            out += `<circle class="dot-blue" cx="${px(x)}" cy="${y(blueTop(opts.blue, x))}" r="2.800"/>`;
            if (opts.orange) {
                out += `<circle class="dot-orange" cx="${px(x)}" cy="${y(opts.bottom - 1)}" r="2.800"/>`;
            }
        });
    });

    document.getElementById(id).innerHTML =
        `<svg viewBox="0 0 ${WIDTH} 210" xmlns="http://www.w3.org/2000/svg">${out}</svg>`;
}

drawChart('chartRam', {
    top: 320,
    grid: [322.7, 364.3, 405.3, 446.7, 488.7],
    axisBottom: 504,
    labels: ['2', '2', '1', '1', '0'],
    titleY: 423,
    greenTop: 335.3,
    greenDot: 335.5,
    redTop: 338,
    redDot: 339,
    bottom: 489.5,
    orange: true,
    blue: [[278, 389], [570.6, 386.5], [698, 386], [714, 391], [1446, 391.5]]
});

drawChart('chartMaps', {
    top: 665,
    grid: [680, 706, 731, 757, 783, 808, 834],
    axisBottom: 849,
    labels: ['12', '10', '8', '6', '4', '2', '0'],
    titleY: 768,
    greenTop: 679.3,
    greenDot: 680,
    redTop: 681,
    redDot: 681.5,
    bottom: 834,
    orange: false,
    blue: [[278, 706], [1446, 706]]
});
```
